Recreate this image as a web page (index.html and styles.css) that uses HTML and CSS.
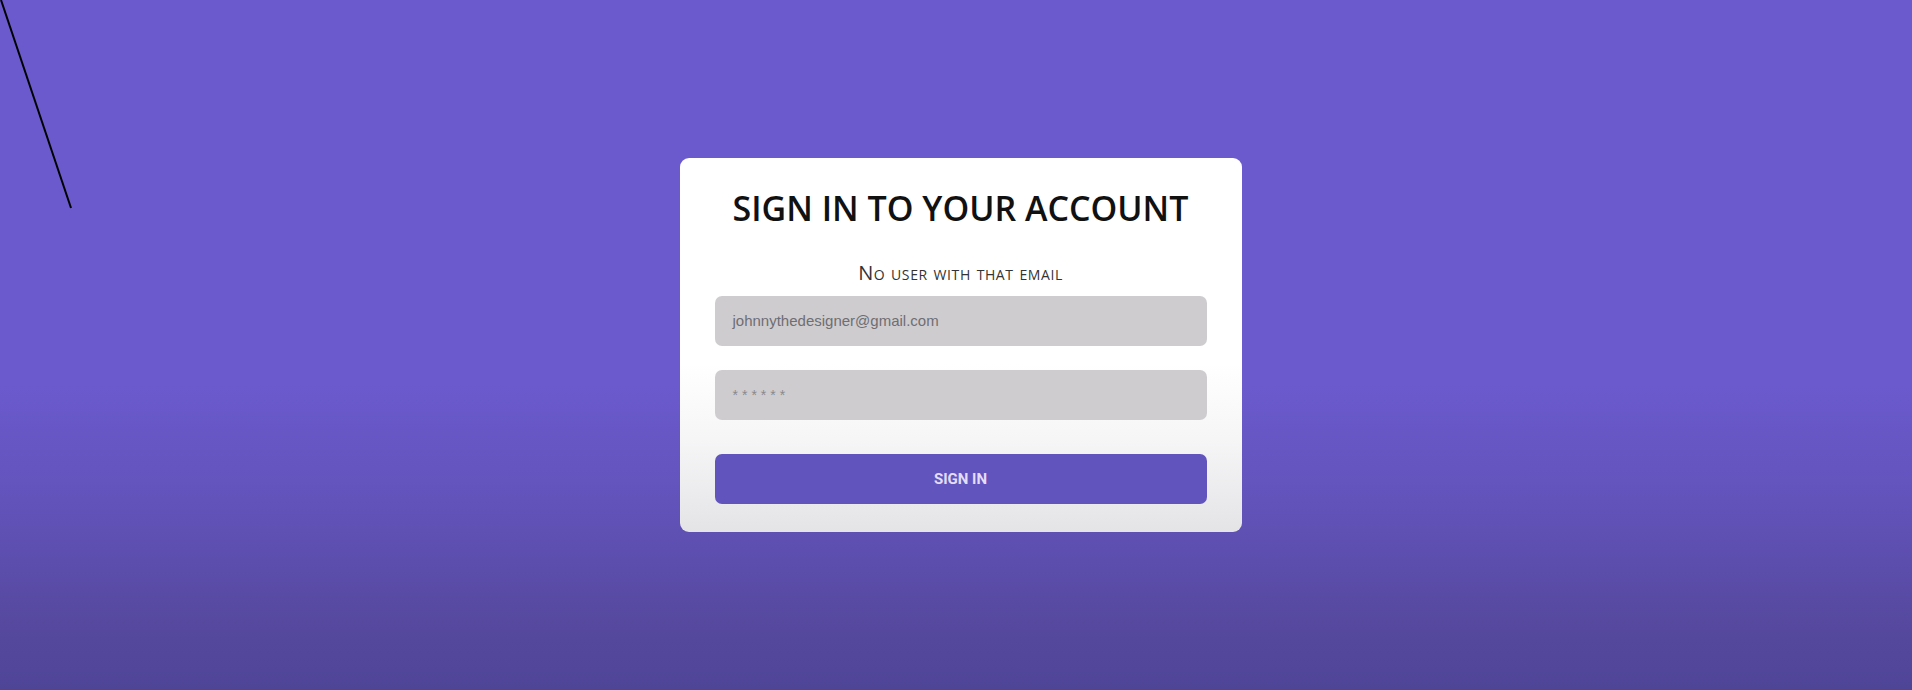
FILE: index.html
```html
<!DOCTYPE html>
<html>
<head>
<meta charset="utf-8">
<link rel="stylesheet" href="styles.css">
</head>
<body>
<svg class="stroke" width="80" height="215" viewBox="0 0 80 215"><line x1="1" y1="0" x2="71" y2="208" stroke="#000" stroke-width="2"/></svg>
<main class="page">
  <form class="card">
    <h1 class="title">SIGN IN TO YOUR ACCOUNT</h1>
    <p class="error">No user with that email</p>
    <div class="field"><span class="value">johnnythedesigner@gmail.com</span></div>
    <div class="field"><span class="value dots">******</span></div>
    <button class="btn" type="button">SIGN IN</button>
  </form>
</main>
</body>
</html>
```

FILE: styles.css
```css
html, body { margin: 0; padding: 0; }
body {
  height: 690px;
  overflow: hidden;
  background: linear-gradient(to bottom, #6a5acd 0px, #6a5acd 385px, #6253bb 500px, #56499f 620px, #4f4597 690px);
  font-family: "Open Sans", "Liberation Sans", sans-serif;
  position: relative;
}
.stroke { position: absolute; left: 0; top: 0; }
.page {
  height: 690px;
  display: flex;
  align-items: center;
  justify-content: center;
  padding-left: 9px;
}
.card {
  width: 562px;
  height: 374px;
  box-sizing: border-box;
  padding: 0 35px;
  border-radius: 9px;
  background: linear-gradient(to bottom, #ffffff 0%, #ffffff 55%, #f6f6f7 75%, #e4e4e7 100%);
  display: flex;
  flex-direction: column;
  margin-top: -1px;
}
.title {
  margin: 30px 0 0;
  text-align: center;
  font-size: 34px;
  font-weight: 600;
  letter-spacing: 0;
  color: #111;
  line-height: 40px;
}
.error {
  margin: 34px 0 0;
  text-align: center;
  font-variant: small-caps;
  font-size: 20px;
  letter-spacing: 0.6px;
  color: #333;
  line-height: 22px;
}
.field {
  margin-top: 12px;
  height: 50px;
  border-radius: 7px;
  background: #cecccf;
  display: flex;
  align-items: center;
  padding-left: 18px;
}
.field + .field { margin-top: 24px; }
.value {
  font-family: "Liberation Sans", Arial, sans-serif;
  font-size: 15px;
  color: #6f6e72;
}
.dots { letter-spacing: 4px; color: #8a898c; font-size: 14px; }
.btn {
  margin-top: 34px;
  height: 50px;
  border: 0;
  border-radius: 7px;
  background: #6254bd;
  color: #e2def8;
  font-family: Roboto, "Liberation Sans", sans-serif;
  font-weight: 700;
  font-size: 15px;
  letter-spacing: 0;
}
```
